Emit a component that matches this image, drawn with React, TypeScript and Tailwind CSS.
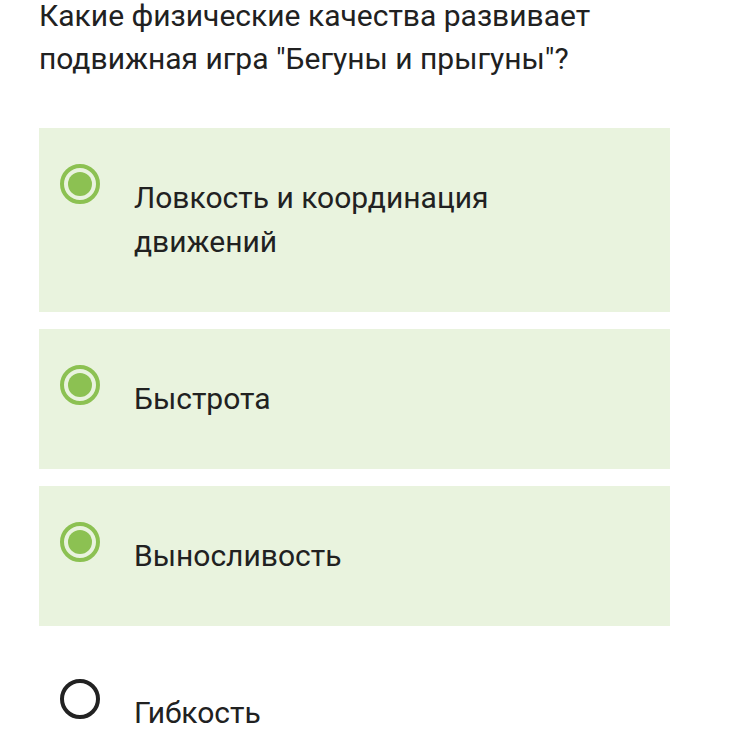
const OPTIONS = [
  { label: 'Ловкость и координация движений', checked: true },
  { label: 'Быстрота', checked: true },
  { label: 'Выносливость', checked: true },
  { label: 'Гибкость', checked: false },
];

function Radio({ checked }: { checked: boolean }) {
  if (checked) {
    return (
      <div className="w-[40px] h-[40px] shrink-0 rounded-full border-[4px] border-[#8cc152] flex items-center justify-center">
        <div className="w-[24px] h-[24px] rounded-full bg-[#8cc152]" />
      </div>
    );
  }
  return <div className="w-[40px] h-[40px] shrink-0 rounded-full border-[4px] border-[#222222]" />;
}

export default function App() {
  return (
    <div className="w-[750px] h-[751px] overflow-hidden bg-white font-['Roboto',sans-serif] text-[#212121]">
      <div className="pl-[39px] pr-[80px]">
        <h1 className="mt-[-6px] text-[30px] leading-[43px] font-normal">
          Какие физические качества развивает подвижная игра "Бегуны и прыгуны"?
        </h1>

        {/* Answer options */}
        <div className="mt-[48px] flex flex-col gap-[17px] w-[631px]">
          {OPTIONS.map((o) => (
            <div
              key={o.label}
              className={`flex items-start gap-[34px] pl-[21px] pr-[120px] pt-[36px] pb-[48px] ${o.checked ? 'bg-[#e9f3de]' : ''}`}
            >
              <Radio checked={o.checked} />
              <span className="mt-[12px] text-[30px] leading-[44px]">{o.label}</span>
            </div>
          ))}
        </div>
      </div>
    </div>
  );
}
